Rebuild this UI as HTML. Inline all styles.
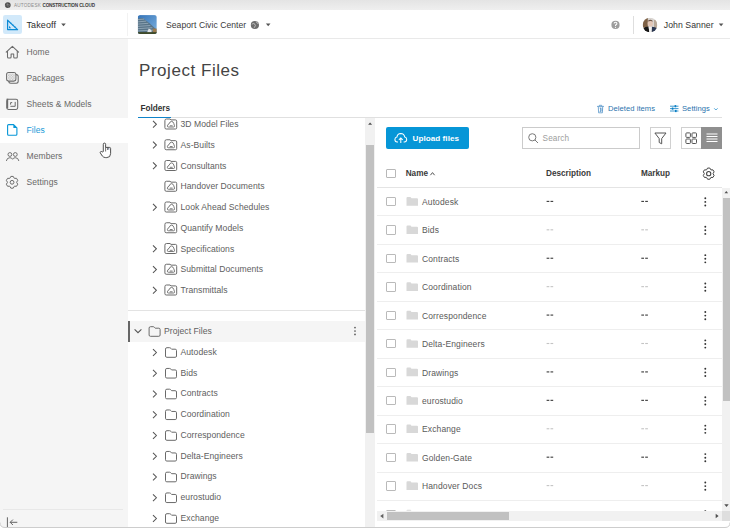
<!DOCTYPE html>
<html><head><meta charset="utf-8"><style>
*{box-sizing:border-box;margin:0;padding:0}
html,body{width:730px;height:529px;overflow:hidden;background:#fff;font-family:"Liberation Sans",sans-serif;color:#3c3c3c}
.a{position:absolute}
.t{position:absolute;white-space:nowrap;line-height:1}
#ov{position:absolute;left:0;top:0;overflow:hidden}
</style></head><body>
<div class="a" style="left:0px;top:0px;width:730px;height:10px;background:linear-gradient(#e4e4e4,#efefef);"></div>
<div class="t" style="left:14.00px;top:4px;font-size:4.6px;color:#8c8c8c;font-weight:normal;letter-spacing:0.22px;">AUTODESK <span style="color:#3a3a3a;font-weight:bold;letter-spacing:-0.12px">CONSTRUCTION CLOUD</span></div>
<div class="a" style="left:0px;top:38px;width:730px;height:1px;background:#e9e9e9;"></div>
<div class="a" style="left:3.1px;top:15.2px;width:18.7px;height:18.5px;background:#d2e9fa;border-radius:2.2px"></div>
<div class="t" style="left:26.50px;top:21px;font-size:9px;color:#2e2e2e;font-weight:normal;letter-spacing:0.1px;">Takeoff</div>
<div class="a" style="left:127px;top:13px;width:1px;height:23px;background:#f2f2f2;"></div>
<div class="t" style="left:166.00px;top:21px;font-size:8.6px;color:#3a3a3a;font-weight:normal;letter-spacing:0.05px;">Seaport Civic Center</div>
<div class="a" style="left:633px;top:15.5px;width:1px;height:18.5px;background:#dedede;"></div>
<div class="t" style="left:663.80px;top:21px;font-size:8.7px;color:#333;font-weight:normal;letter-spacing:0.05px;">John Sanner</div>
<div class="a" style="left:0px;top:39px;width:128px;height:490px;background:#f5f5f5;"></div>
<div class="a" style="left:0px;top:117.6px;width:128px;height:25.4px;background:#fff;"></div>
<div class="t" style="left:26.60px;top:48px;font-size:8.5px;color:#686868;font-weight:normal;letter-spacing:0.05px;">Home</div>
<div class="t" style="left:26.60px;top:74px;font-size:8.5px;color:#686868;font-weight:normal;letter-spacing:0.05px;">Packages</div>
<div class="t" style="left:26.60px;top:100px;font-size:8.5px;color:#686868;font-weight:normal;letter-spacing:0.05px;">Sheets &amp; Models</div>
<div class="t" style="left:26.60px;top:126px;font-size:8.5px;color:#1a9ad8;font-weight:normal;letter-spacing:0.05px;">Files</div>
<div class="t" style="left:26.60px;top:152px;font-size:8.5px;color:#686868;font-weight:normal;letter-spacing:0.05px;">Members</div>
<div class="t" style="left:26.60px;top:178px;font-size:8.5px;color:#686868;font-weight:normal;letter-spacing:0.05px;">Settings</div>
<div class="a" style="left:3px;top:509px;width:120px;height:1px;background:#e8e8e8;"></div>
<div class="t" style="left:139.00px;top:62px;font-size:17px;color:#444;font-weight:normal;letter-spacing:0.55px;">Project Files</div>
<div class="t" style="left:140.50px;top:105px;font-size:8.2px;color:#333;font-weight:bold;letter-spacing:0px;">Folders</div>
<div class="a" style="left:137.8px;top:117px;width:584.6px;height:1px;background:#e0e0e0;"></div>
<div class="a" style="left:137.8px;top:116.6px;width:33.7px;height:1.6px;background:#0f83c9;"></div>
<div class="t" style="left:608.00px;top:105px;font-size:7.6px;color:#2a73ad;font-weight:normal;letter-spacing:0.05px;">Deleted items</div>
<div class="t" style="left:682.00px;top:105px;font-size:7.6px;color:#2a73ad;font-weight:normal;letter-spacing:0.05px;">Settings</div>
<div class="a" style="left:128px;top:118px;width:237.2px;height:411px;overflow:hidden"><div class="a" style="left:-128px;top:-118px;width:730px;height:529px">
<div class="a" style="left:128px;top:310px;width:237.2px;height:1px;background:#e3e3e3;"></div>
<div class="a" style="left:128px;top:320.8px;width:237.2px;height:20.9px;background:#f5f5f5;"></div>
<div class="a" style="left:128px;top:320.8px;width:1.5px;height:20.9px;background:#666;"></div>
<div class="t" style="left:180.50px;top:120px;font-size:8.6px;color:#606060;font-weight:normal;letter-spacing:0.05px;">3D Model Files</div>
<div class="t" style="left:180.50px;top:141px;font-size:8.6px;color:#606060;font-weight:normal;letter-spacing:0.05px;">As-Builts</div>
<div class="t" style="left:180.50px;top:162px;font-size:8.6px;color:#606060;font-weight:normal;letter-spacing:0.05px;">Consultants</div>
<div class="t" style="left:180.50px;top:182px;font-size:8.6px;color:#606060;font-weight:normal;letter-spacing:0.05px;">Handover Documents</div>
<div class="t" style="left:180.50px;top:203px;font-size:8.6px;color:#606060;font-weight:normal;letter-spacing:0.05px;">Look Ahead Schedules</div>
<div class="t" style="left:180.50px;top:224px;font-size:8.6px;color:#606060;font-weight:normal;letter-spacing:0.05px;">Quantify Models</div>
<div class="t" style="left:180.50px;top:245px;font-size:8.6px;color:#606060;font-weight:normal;letter-spacing:0.05px;">Specifications</div>
<div class="t" style="left:180.50px;top:265px;font-size:8.6px;color:#606060;font-weight:normal;letter-spacing:0.05px;">Submittal Documents</div>
<div class="t" style="left:180.50px;top:286px;font-size:8.6px;color:#606060;font-weight:normal;letter-spacing:0.05px;">Transmittals</div>
<div class="t" style="left:164.00px;top:327px;font-size:8.6px;color:#606060;font-weight:normal;letter-spacing:0.05px;">Project Files</div>
<div class="t" style="left:180.50px;top:348px;font-size:8.6px;color:#606060;font-weight:normal;letter-spacing:0.05px;">Autodesk</div>
<div class="t" style="left:180.50px;top:369px;font-size:8.6px;color:#606060;font-weight:normal;letter-spacing:0.05px;">Bids</div>
<div class="t" style="left:180.50px;top:389px;font-size:8.6px;color:#606060;font-weight:normal;letter-spacing:0.05px;">Contracts</div>
<div class="t" style="left:180.50px;top:410px;font-size:8.6px;color:#606060;font-weight:normal;letter-spacing:0.05px;">Coordination</div>
<div class="t" style="left:180.50px;top:431px;font-size:8.6px;color:#606060;font-weight:normal;letter-spacing:0.05px;">Correspondence</div>
<div class="t" style="left:180.50px;top:452px;font-size:8.6px;color:#606060;font-weight:normal;letter-spacing:0.05px;">Delta-Engineers</div>
<div class="t" style="left:180.50px;top:472px;font-size:8.6px;color:#606060;font-weight:normal;letter-spacing:0.05px;">Drawings</div>
<div class="t" style="left:180.50px;top:493px;font-size:8.6px;color:#606060;font-weight:normal;letter-spacing:0.05px;">eurostudio</div>
<div class="t" style="left:180.50px;top:514px;font-size:8.6px;color:#606060;font-weight:normal;letter-spacing:0.05px;">Exchange</div>
</div></div>
<div class="a" style="left:365.2px;top:118px;width:9.8px;height:411px;background:#f1f1f1;"></div>
<div class="a" style="left:366.2px;top:144.7px;width:7.8px;height:288.6px;background:#c1c1c1;"></div>
<div class="a" style="left:386px;top:127.3px;width:83px;height:21.7px;background:#0696d7;border-radius:2px"></div>
<div class="t" style="left:412.60px;top:135px;font-size:8.1px;color:#fff;font-weight:bold;letter-spacing:0.05px;">Upload files</div>
<div class="a" style="left:522px;top:127.2px;width:118.2px;height:21.4px;background:#fff;border:1px solid #cbcbcb"></div>
<div class="t" style="left:542.60px;top:135px;font-size:8.2px;color:#9d9d9d;font-weight:normal;letter-spacing:0.1px;">Search</div>
<div class="a" style="left:650px;top:127.2px;width:20.6px;height:21.4px;background:#fff;border:1px solid #d0d0d0"></div>
<div class="a" style="left:680.6px;top:127.2px;width:41.8px;height:21.4px;background:#fff;border:1px solid #d0d0d0"></div>
<div class="a" style="left:701.3px;top:127.2px;width:21.1px;height:21.4px;background:#8f8f8f;"></div>
<div class="a" style="left:386.2px;top:169.2px;width:9.6px;height:9px;background:#fff;border:1px solid #b8b8b8;border-radius:1px"></div>
<div class="t" style="left:405.70px;top:170px;font-size:8.2px;color:#3a3a3a;font-weight:bold;letter-spacing:0px;">Name</div>
<div class="t" style="left:546.00px;top:170px;font-size:8.2px;color:#3a3a3a;font-weight:bold;letter-spacing:0px;">Description</div>
<div class="t" style="left:641.00px;top:170px;font-size:8.2px;color:#3a3a3a;font-weight:bold;letter-spacing:0px;">Markup</div>
<div class="a" style="left:377px;top:187px;width:345.3px;height:1px;background:#e4e4e4;"></div>
<div class="a" style="left:375px;top:188px;width:347.3px;height:322.7px;overflow:hidden"><div class="a" style="left:-375px;top:-188px;width:730px;height:529px">
<div class="a" style="left:377px;top:215px;width:345.3px;height:1px;background:#eeeeee;"></div>
<div class="a" style="left:386.2px;top:197.0px;width:9.6px;height:9.4px;background:#fff;border:1px solid #bababa;border-radius:1px"></div>
<div class="t" style="left:422.00px;top:198px;font-size:8.5px;color:#5a5a5a;font-weight:normal;letter-spacing:0.12px;">Autodesk</div>
<div class="a" style="left:377px;top:244px;width:345.3px;height:1px;background:#eeeeee;"></div>
<div class="a" style="left:386.2px;top:225.42px;width:9.6px;height:9.4px;background:#fff;border:1px solid #bababa;border-radius:1px"></div>
<div class="t" style="left:422.00px;top:226px;font-size:8.5px;color:#5a5a5a;font-weight:normal;letter-spacing:0.12px;">Bids</div>
<div class="a" style="left:377px;top:272px;width:345.3px;height:1px;background:#eeeeee;"></div>
<div class="a" style="left:386.2px;top:253.84px;width:9.6px;height:9.4px;background:#fff;border:1px solid #bababa;border-radius:1px"></div>
<div class="t" style="left:422.00px;top:255px;font-size:8.5px;color:#5a5a5a;font-weight:normal;letter-spacing:0.12px;">Contracts</div>
<div class="a" style="left:377px;top:301px;width:345.3px;height:1px;background:#eeeeee;"></div>
<div class="a" style="left:386.2px;top:282.26000000000005px;width:9.6px;height:9.4px;background:#fff;border:1px solid #bababa;border-radius:1px"></div>
<div class="t" style="left:422.00px;top:283px;font-size:8.5px;color:#5a5a5a;font-weight:normal;letter-spacing:0.12px;">Coordination</div>
<div class="a" style="left:377px;top:329px;width:345.3px;height:1px;background:#eeeeee;"></div>
<div class="a" style="left:386.2px;top:310.68000000000006px;width:9.6px;height:9.4px;background:#fff;border:1px solid #bababa;border-radius:1px"></div>
<div class="t" style="left:422.00px;top:312px;font-size:8.5px;color:#5a5a5a;font-weight:normal;letter-spacing:0.12px;">Correspondence</div>
<div class="a" style="left:377px;top:358px;width:345.3px;height:1px;background:#eeeeee;"></div>
<div class="a" style="left:386.2px;top:339.1px;width:9.6px;height:9.4px;background:#fff;border:1px solid #bababa;border-radius:1px"></div>
<div class="t" style="left:422.00px;top:340px;font-size:8.5px;color:#5a5a5a;font-weight:normal;letter-spacing:0.12px;">Delta-Engineers</div>
<div class="a" style="left:377px;top:386px;width:345.3px;height:1px;background:#eeeeee;"></div>
<div class="a" style="left:386.2px;top:367.52000000000004px;width:9.6px;height:9.4px;background:#fff;border:1px solid #bababa;border-radius:1px"></div>
<div class="t" style="left:422.00px;top:369px;font-size:8.5px;color:#5a5a5a;font-weight:normal;letter-spacing:0.12px;">Drawings</div>
<div class="a" style="left:377px;top:415px;width:345.3px;height:1px;background:#eeeeee;"></div>
<div class="a" style="left:386.2px;top:395.94000000000005px;width:9.6px;height:9.4px;background:#fff;border:1px solid #bababa;border-radius:1px"></div>
<div class="t" style="left:422.00px;top:397px;font-size:8.5px;color:#5a5a5a;font-weight:normal;letter-spacing:0.12px;">eurostudio</div>
<div class="a" style="left:377px;top:443px;width:345.3px;height:1px;background:#eeeeee;"></div>
<div class="a" style="left:386.2px;top:424.36px;width:9.6px;height:9.4px;background:#fff;border:1px solid #bababa;border-radius:1px"></div>
<div class="t" style="left:422.00px;top:425px;font-size:8.5px;color:#5a5a5a;font-weight:normal;letter-spacing:0.12px;">Exchange</div>
<div class="a" style="left:377px;top:472px;width:345.3px;height:1px;background:#eeeeee;"></div>
<div class="a" style="left:386.2px;top:452.7800000000001px;width:9.6px;height:9.4px;background:#fff;border:1px solid #bababa;border-radius:1px"></div>
<div class="t" style="left:422.00px;top:454px;font-size:8.5px;color:#5a5a5a;font-weight:normal;letter-spacing:0.12px;">Golden-Gate</div>
<div class="a" style="left:377px;top:500px;width:345.3px;height:1px;background:#eeeeee;"></div>
<div class="a" style="left:386.2px;top:481.20000000000005px;width:9.6px;height:9.4px;background:#fff;border:1px solid #bababa;border-radius:1px"></div>
<div class="t" style="left:422.00px;top:482px;font-size:8.5px;color:#5a5a5a;font-weight:normal;letter-spacing:0.12px;">Handover Docs</div>
<div class="a" style="left:377px;top:529px;width:345.3px;height:1px;background:#eeeeee;"></div>
<div class="a" style="left:386.2px;top:509.62px;width:9.6px;height:9.4px;background:#fff;border:1px solid #bababa;border-radius:1px"></div>
</div></div>
<div class="a" style="left:722.3px;top:187.5px;width:7.7px;height:323.2px;background:#f1f1f1;"></div>
<div class="a" style="left:723px;top:197.8px;width:7px;height:203px;background:#c1c1c1;"></div>
<div class="a" style="left:377px;top:510.8px;width:353px;height:10.4px;background:#f1f1f1;"></div>
<div class="a" style="left:722.3px;top:510.8px;width:7.7px;height:10.4px;background:#dedede;"></div>
<div class="a" style="left:386.7px;top:512.3px;width:122.5px;height:7.3px;background:#c1c1c1;"></div>
<svg id="ov" width="730" height="529" viewBox="0 0 730 529"><circle cx="7.8" cy="5.1" r="2.9" fill="#4d4d4d"/><path d="M5.4 5.4 Q7.6 3.4 10.2 5.4 M7 3 L8.4 7.6" stroke="#9a9a9a" stroke-width="0.55" fill="none"/>
<path d="M7.6 20.2 L17.6 29.6 L7.6 29.6 Z" fill="none" stroke="#0a8ad6" stroke-width="1.2" stroke-linejoin="round"/><path d="M9 25.8 L11.2 28.2 L9 28.2Z" fill="#0a8ad6"/><path d="M10.6 23.6 L11.4 22.8 M12.6 25.5 L13.4 24.7 M14.6 27.4 L15.4 26.6" stroke="#0a8ad6" stroke-width="0.7"/>
<path d="M61.2 23.6 H65.8 L63.5 26.2Z" fill="#555"/>
<defs><clipPath id="cp"><rect x="0" y="0" width="19" height="19" rx="2.5"/></clipPath><linearGradient id="sky" x1="0" y1="0" x2="1" y2="1"><stop offset="0" stop-color="#3473b8"/><stop offset="1" stop-color="#7db2df"/></linearGradient></defs>
<g clip-path="url(#cp)" transform="translate(137.8 15.1)"><rect width="19" height="19" fill="url(#sky)"/>
<path d="M0 3.5 L5 3 L12 8.5 L17.5 13.5 L19 19 L0 19Z" fill="#587488"/>
<path d="M0 4.5 L6.5 4 M0 6.8 L8.5 6 M0 9 L10.5 8.2 M0 11.3 L12.5 10.4 M0 13.6 L14.5 12.6 M0 15.8 L16 15" stroke="#a3b6c4" stroke-width="0.7"/>
<path d="M9 18 L11 13.5 L13.5 15 L14 18Z" fill="#dfe4e8"/>
<rect x="15" y="13.5" width="4" height="4.5" fill="#9c7a4e"/>
<rect x="0" y="17" width="19" height="2" fill="#3f4a2a"/></g>
<circle cx="254.9" cy="25" r="4.1" fill="#6d6d6d"/><path d="M251.8 24.3 Q253.2 22.9 254.5 23.8 L255.4 25.6 L254.2 27.8 M256.3 21.4 L257 23 L258.6 23.6" stroke="#cfcfcf" stroke-width="0.8" fill="none"/>
<path d="M265.9 23.6 H270.5 L268.2 26.2Z" fill="#555"/>
<circle cx="615.5" cy="24.9" r="4.1" fill="#9d9d9d"/>
<path d="M614.1 23.6 Q614.1 22.3 615.5 22.3 Q616.9 22.3 616.9 23.5 Q616.9 24.3 616 24.8 Q615.5 25.1 615.5 25.9" fill="none" stroke="#fff" stroke-width="1.05"/><circle cx="615.5" cy="27.3" r="0.6" fill="#fff"/>
<defs><clipPath id="av"><circle cx="650" cy="25" r="7.3"/></clipPath></defs><g clip-path="url(#av)"><rect x="642.7" y="17.7" width="14.6" height="14.6" fill="#d9d5d1"/>
<path d="M642.7 18 H647.8 V27.5 H642.7Z" fill="#7d6045"/><rect x="654" y="20" width="3.3" height="8" fill="#b8a898"/>
<ellipse cx="650.3" cy="23.6" rx="2.6" ry="3.3" fill="#e2c6b6"/><path d="M647.7 21.6 Q648 19.8 650.3 19.8 Q652.6 19.8 652.9 21.6 Q651.5 20.8 650.3 20.9 Q649 20.9 647.7 21.6Z" fill="#6d5545"/>
<path d="M643.5 32.3 V28 Q645 26.8 648.6 26.6 L649.4 32.3Z" fill="#161616"/><path d="M651.8 26.8 Q655.5 27 657.3 28.4 V32.3 H651.8Z" fill="#2b3852"/><path d="M648.6 26.8 H651.8 L651.2 32.3 H649.3Z" fill="#f2f2f2"/></g></g>
<path d="M718.8 23.6 H723.4 L721.1 26.2Z" fill="#555"/>
<path d="M6.2 52.2 L12.4 46.3 L18.6 52.2" fill="none" stroke="#6b6b6b" stroke-width="1.05" stroke-linejoin="round" stroke-linecap="round"/><path d="M7.5 51 V57 Q7.5 58 8.5 58 H10.1 Q11.1 58 11.1 57 V54 H13.7 V57 Q13.7 58 14.7 58 H16.3 Q17.3 58 17.3 57 V51" fill="none" stroke="#6b6b6b" stroke-width="1.05" stroke-linejoin="round"/>
<defs><pattern id="dots" x="0" y="0" width="1.6" height="1.6" patternUnits="userSpaceOnUse"><rect width="1.6" height="1.6" fill="#f5f5f5"/><rect x="0" y="0" width="0.8" height="0.8" fill="#bdbdbd"/><rect x="0.8" y="0.8" width="0.8" height="0.8" fill="#bdbdbd"/></pattern></defs>
<rect x="8.8" y="74.6" width="9.4" height="8.6" rx="2" fill="none" stroke="#6b6b6b" stroke-width="1.05"/><rect x="6.6" y="72.5" width="9.3" height="8.6" rx="2" fill="#f5f5f5" stroke="#6b6b6b" stroke-width="1.05"/><rect x="7.6" y="73.5" width="7.3" height="6.6" rx="1" fill="url(#dots)"/>
<rect x="6.8" y="99.3" width="10.9" height="10.1" rx="1.6" fill="none" stroke="#6b6b6b" stroke-width="1.05"/><path d="M7.4 98.6 V108.4" stroke="#6b6b6b" stroke-width="1.6"/><path d="M10.6 104.6 V102.6 H12.2 M10.4 106.3 H15.2 V101.9" fill="none" stroke="#6b6b6b" stroke-width="1"/>
<path d="M8.6 124.6 H13.6 L16.9 127.9 V134.2 Q16.9 135.2 15.9 135.2 H8.6 Q7.6 135.2 7.6 134.2 V125.6 Q7.6 124.6 8.6 124.6Z" fill="none" stroke="#0696d7" stroke-width="1.1" stroke-linejoin="round"/><path d="M13.4 124.6 L16.9 128.1 H13.4Z" fill="#0696d7"/>
<circle cx="9.9" cy="154.5" r="1.9" fill="none" stroke="#6b6b6b" stroke-width="0.95"/><circle cx="15.3" cy="154.5" r="1.9" fill="none" stroke="#6b6b6b" stroke-width="0.95"/><path d="M6.4 160.6 Q6.9 157.7 9.9 157.7 Q11.9 157.7 12.6 159.3 Q13.3 157.7 15.3 157.7 Q18.3 157.7 18.8 160.6" fill="none" stroke="#6b6b6b" stroke-width="0.95" stroke-linecap="round"/>
<path d="M9.86 178.26 L10.86 176.42 L13.24 176.42 L14.24 178.26 L14.45 178.38 L16.55 178.33 L17.74 180.39 L16.65 182.18 L16.65 182.42 L17.74 184.21 L16.55 186.27 L14.45 186.22 L14.24 186.34 L13.24 188.18 L10.86 188.18 L9.86 186.34 L9.65 186.22 L7.55 186.27 L6.36 184.21 L7.45 182.42 L7.45 182.18 L6.36 180.39 L7.55 178.33 L9.65 178.38Z" fill="none" stroke="#6b6b6b" stroke-width="1" stroke-linejoin="round"/><circle cx="12.05" cy="182.3" r="1.9" fill="none" stroke="#6b6b6b" stroke-width="1"/>
<path d="M103.3 151.6 V144.3 Q103.3 143.1 104.4 143.1 Q105.6 143.1 105.6 144.3 V147.4 H109.5 Q110.6 147.4 110.6 148.5 V153.6 Q110.6 157.6 106.8 157.6 H105.6 Q103.6 157.6 102.3 156 L100.3 152.9 Q99.9 152 100.7 151.6 Q101.5 151.2 102.2 152 Z" fill="#fff" stroke="#333" stroke-width="0.85" stroke-linejoin="round"/><path d="M105.6 147.4 V151.5 M107.6 147.6 V150" stroke="#333" stroke-width="0.7"/><rect x="107.8" y="148" width="1.5" height="1.6" fill="#8a93a8"/>
<path d="M7.4 517.3 V527" stroke="#555" stroke-width="0.9"/><path d="M17.3 522.3 H10.2 M12.9 519.6 L10.2 522.3 L12.9 525" fill="none" stroke="#555" stroke-width="0.9"/>
<path d="M597 106.4 H604 M599.3 106.3 V105.3 H601.7 V106.3 M598.3 106.6 L598.6 112.8 H602.4 L602.7 106.6 M599.6 108 H601.4 M600.5 108 V111.4 M599.6 111.4 H601.4 M601.9 108.3 V111" fill="none" stroke="#4d8fc6" stroke-width="0.75"/>
<g transform="translate(0 2.6)"><path d="M670 103.6 H678.5 M670 106 H678.5 M670 108.4 H678.5" stroke="#0a7fc4" stroke-width="0.8"/><rect x="674.6" y="102.5" width="1.6" height="2.2" fill="#0a7fc4"/><rect x="671.8" y="104.9" width="1.6" height="2.2" fill="#0a7fc4"/><rect x="675" y="107.3" width="1.6" height="2.2" fill="#0a7fc4"/></g>
<path d="M714.2 108.3 L715.9 110 L717.6 108.3" fill="none" stroke="#0a7fc4" stroke-width="0.7"/>
<defs><clipPath id="treeclip"><rect x="128" y="118" width="237.2" height="411"/></clipPath></defs><g clip-path="url(#treeclip)"><path d="M153.00 120.90 L156.40 124.30 L153.00 127.70" fill="none" stroke="#555" stroke-width="1.05"/><g transform="translate(164.40 118.50)"><path d="M0.5 2.2 Q0.5 0.5 2 0.5 H5.6 L6.6 1.4 H11.1 Q12.3 1.4 12.3 2.7 V9.3 Q12.3 10.5 11.1 10.5 H1.8 Q0.5 10.5 0.5 9.2 Z" fill="none" stroke="#6a6a6a" stroke-width="1"/><path d="M3.9 8.5 Q2.9 8.5 3.0 7.4 Q3.2 5.7 4.7 5.3 Q5.4 2.9 7.2 2.9 Q8.9 3 9.4 5 L10.1 7.3 Q10.3 8.5 9.3 8.5 Z M5.4 7.3 H8.2" fill="none" stroke="#6a6a6a" stroke-width="0.9"/></g><path d="M153.00 141.65 L156.40 145.05 L153.00 148.45" fill="none" stroke="#555" stroke-width="1.05"/><g transform="translate(164.40 139.25)"><path d="M0.5 2.2 Q0.5 0.5 2 0.5 H5.6 L6.6 1.4 H11.1 Q12.3 1.4 12.3 2.7 V9.3 Q12.3 10.5 11.1 10.5 H1.8 Q0.5 10.5 0.5 9.2 Z" fill="none" stroke="#6a6a6a" stroke-width="1"/><path d="M3.9 8.5 Q2.9 8.5 3.0 7.4 Q3.2 5.7 4.7 5.3 Q5.4 2.9 7.2 2.9 Q8.9 3 9.4 5 L10.1 7.3 Q10.3 8.5 9.3 8.5 Z M5.4 7.3 H8.2" fill="none" stroke="#6a6a6a" stroke-width="0.9"/></g><path d="M153.00 162.40 L156.40 165.80 L153.00 169.20" fill="none" stroke="#555" stroke-width="1.05"/><g transform="translate(164.40 160.00)"><path d="M0.5 2.2 Q0.5 0.5 2 0.5 H5.6 L6.6 1.4 H11.1 Q12.3 1.4 12.3 2.7 V9.3 Q12.3 10.5 11.1 10.5 H1.8 Q0.5 10.5 0.5 9.2 Z" fill="none" stroke="#6a6a6a" stroke-width="1"/><path d="M3.9 8.5 Q2.9 8.5 3.0 7.4 Q3.2 5.7 4.7 5.3 Q5.4 2.9 7.2 2.9 Q8.9 3 9.4 5 L10.1 7.3 Q10.3 8.5 9.3 8.5 Z M5.4 7.3 H8.2" fill="none" stroke="#6a6a6a" stroke-width="0.9"/></g><g transform="translate(164.40 180.75)"><path d="M0.5 2.2 Q0.5 0.5 2 0.5 H5.6 L6.6 1.4 H11.1 Q12.3 1.4 12.3 2.7 V9.3 Q12.3 10.5 11.1 10.5 H1.8 Q0.5 10.5 0.5 9.2 Z" fill="none" stroke="#6a6a6a" stroke-width="1"/><path d="M3.9 8.5 Q2.9 8.5 3.0 7.4 Q3.2 5.7 4.7 5.3 Q5.4 2.9 7.2 2.9 Q8.9 3 9.4 5 L10.1 7.3 Q10.3 8.5 9.3 8.5 Z M5.4 7.3 H8.2" fill="none" stroke="#6a6a6a" stroke-width="0.9"/></g><path d="M153.00 203.90 L156.40 207.30 L153.00 210.70" fill="none" stroke="#555" stroke-width="1.05"/><g transform="translate(164.40 201.50)"><path d="M0.5 2.2 Q0.5 0.5 2 0.5 H5.6 L6.6 1.4 H11.1 Q12.3 1.4 12.3 2.7 V9.3 Q12.3 10.5 11.1 10.5 H1.8 Q0.5 10.5 0.5 9.2 Z" fill="none" stroke="#6a6a6a" stroke-width="1"/><path d="M3.9 8.5 Q2.9 8.5 3.0 7.4 Q3.2 5.7 4.7 5.3 Q5.4 2.9 7.2 2.9 Q8.9 3 9.4 5 L10.1 7.3 Q10.3 8.5 9.3 8.5 Z M5.4 7.3 H8.2" fill="none" stroke="#6a6a6a" stroke-width="0.9"/></g><g transform="translate(164.40 222.25)"><path d="M0.5 2.2 Q0.5 0.5 2 0.5 H5.6 L6.6 1.4 H11.1 Q12.3 1.4 12.3 2.7 V9.3 Q12.3 10.5 11.1 10.5 H1.8 Q0.5 10.5 0.5 9.2 Z" fill="none" stroke="#6a6a6a" stroke-width="1"/><path d="M3.9 8.5 Q2.9 8.5 3.0 7.4 Q3.2 5.7 4.7 5.3 Q5.4 2.9 7.2 2.9 Q8.9 3 9.4 5 L10.1 7.3 Q10.3 8.5 9.3 8.5 Z M5.4 7.3 H8.2" fill="none" stroke="#6a6a6a" stroke-width="0.9"/></g><path d="M153.00 245.40 L156.40 248.80 L153.00 252.20" fill="none" stroke="#555" stroke-width="1.05"/><g transform="translate(164.40 243.00)"><path d="M0.5 2.2 Q0.5 0.5 2 0.5 H5.6 L6.6 1.4 H11.1 Q12.3 1.4 12.3 2.7 V9.3 Q12.3 10.5 11.1 10.5 H1.8 Q0.5 10.5 0.5 9.2 Z" fill="none" stroke="#6a6a6a" stroke-width="1"/><path d="M3.9 8.5 Q2.9 8.5 3.0 7.4 Q3.2 5.7 4.7 5.3 Q5.4 2.9 7.2 2.9 Q8.9 3 9.4 5 L10.1 7.3 Q10.3 8.5 9.3 8.5 Z M5.4 7.3 H8.2" fill="none" stroke="#6a6a6a" stroke-width="0.9"/></g><path d="M153.00 266.15 L156.40 269.55 L153.00 272.95" fill="none" stroke="#555" stroke-width="1.05"/><g transform="translate(164.40 263.75)"><path d="M0.5 2.2 Q0.5 0.5 2 0.5 H5.6 L6.6 1.4 H11.1 Q12.3 1.4 12.3 2.7 V9.3 Q12.3 10.5 11.1 10.5 H1.8 Q0.5 10.5 0.5 9.2 Z" fill="none" stroke="#6a6a6a" stroke-width="1"/><path d="M3.9 8.5 Q2.9 8.5 3.0 7.4 Q3.2 5.7 4.7 5.3 Q5.4 2.9 7.2 2.9 Q8.9 3 9.4 5 L10.1 7.3 Q10.3 8.5 9.3 8.5 Z M5.4 7.3 H8.2" fill="none" stroke="#6a6a6a" stroke-width="0.9"/></g><path d="M153.00 286.90 L156.40 290.30 L153.00 293.70" fill="none" stroke="#555" stroke-width="1.05"/><g transform="translate(164.40 284.50)"><path d="M0.5 2.2 Q0.5 0.5 2 0.5 H5.6 L6.6 1.4 H11.1 Q12.3 1.4 12.3 2.7 V9.3 Q12.3 10.5 11.1 10.5 H1.8 Q0.5 10.5 0.5 9.2 Z" fill="none" stroke="#6a6a6a" stroke-width="1"/><path d="M3.9 8.5 Q2.9 8.5 3.0 7.4 Q3.2 5.7 4.7 5.3 Q5.4 2.9 7.2 2.9 Q8.9 3 9.4 5 L10.1 7.3 Q10.3 8.5 9.3 8.5 Z M5.4 7.3 H8.2" fill="none" stroke="#6a6a6a" stroke-width="0.9"/></g><path d="M134.6 329.3 L138 332.7 L141.4 329.3" fill="none" stroke="#555" stroke-width="1.05"/><path d="M149.10 328.10 Q149.10 326.70 150.50 326.70 H153.20 Q154.00 326.70 154.50 327.40 L155.20 328.20 H158.80 Q160.10 328.20 160.10 329.50 V335.00 Q160.10 336.30 158.80 336.30 H150.40 Q149.10 336.30 149.10 335.00 Z" fill="none" stroke="#6a6a6a" stroke-width="1"/><circle cx="355" cy="327.6" r="0.85" fill="#555"/><circle cx="355" cy="331" r="0.85" fill="#555"/><circle cx="355" cy="334.4" r="0.85" fill="#555"/><path d="M153.00 349.10 L156.40 352.50 L153.00 355.90" fill="none" stroke="#555" stroke-width="1.05"/><path d="M165.50 349.10 Q165.50 347.70 166.90 347.70 H169.60 Q170.40 347.70 170.90 348.40 L171.60 349.20 H175.20 Q176.50 349.20 176.50 350.50 V356.00 Q176.50 357.30 175.20 357.30 H166.80 Q165.50 357.30 165.50 356.00 Z" fill="none" stroke="#6a6a6a" stroke-width="1"/><path d="M153.00 369.85 L156.40 373.25 L153.00 376.65" fill="none" stroke="#555" stroke-width="1.05"/><path d="M165.50 369.85 Q165.50 368.45 166.90 368.45 H169.60 Q170.40 368.45 170.90 369.15 L171.60 369.95 H175.20 Q176.50 369.95 176.50 371.25 V376.75 Q176.50 378.05 175.20 378.05 H166.80 Q165.50 378.05 165.50 376.75 Z" fill="none" stroke="#6a6a6a" stroke-width="1"/><path d="M153.00 390.60 L156.40 394.00 L153.00 397.40" fill="none" stroke="#555" stroke-width="1.05"/><path d="M165.50 390.60 Q165.50 389.20 166.90 389.20 H169.60 Q170.40 389.20 170.90 389.90 L171.60 390.70 H175.20 Q176.50 390.70 176.50 392.00 V397.50 Q176.50 398.80 175.20 398.80 H166.80 Q165.50 398.80 165.50 397.50 Z" fill="none" stroke="#6a6a6a" stroke-width="1"/><path d="M153.00 411.35 L156.40 414.75 L153.00 418.15" fill="none" stroke="#555" stroke-width="1.05"/><path d="M165.50 411.35 Q165.50 409.95 166.90 409.95 H169.60 Q170.40 409.95 170.90 410.65 L171.60 411.45 H175.20 Q176.50 411.45 176.50 412.75 V418.25 Q176.50 419.55 175.20 419.55 H166.80 Q165.50 419.55 165.50 418.25 Z" fill="none" stroke="#6a6a6a" stroke-width="1"/><path d="M153.00 432.10 L156.40 435.50 L153.00 438.90" fill="none" stroke="#555" stroke-width="1.05"/><path d="M165.50 432.10 Q165.50 430.70 166.90 430.70 H169.60 Q170.40 430.70 170.90 431.40 L171.60 432.20 H175.20 Q176.50 432.20 176.50 433.50 V439.00 Q176.50 440.30 175.20 440.30 H166.80 Q165.50 440.30 165.50 439.00 Z" fill="none" stroke="#6a6a6a" stroke-width="1"/><path d="M153.00 452.85 L156.40 456.25 L153.00 459.65" fill="none" stroke="#555" stroke-width="1.05"/><path d="M165.50 452.85 Q165.50 451.45 166.90 451.45 H169.60 Q170.40 451.45 170.90 452.15 L171.60 452.95 H175.20 Q176.50 452.95 176.50 454.25 V459.75 Q176.50 461.05 175.20 461.05 H166.80 Q165.50 461.05 165.50 459.75 Z" fill="none" stroke="#6a6a6a" stroke-width="1"/><path d="M153.00 473.60 L156.40 477.00 L153.00 480.40" fill="none" stroke="#555" stroke-width="1.05"/><path d="M165.50 473.60 Q165.50 472.20 166.90 472.20 H169.60 Q170.40 472.20 170.90 472.90 L171.60 473.70 H175.20 Q176.50 473.70 176.50 475.00 V480.50 Q176.50 481.80 175.20 481.80 H166.80 Q165.50 481.80 165.50 480.50 Z" fill="none" stroke="#6a6a6a" stroke-width="1"/><path d="M153.00 494.35 L156.40 497.75 L153.00 501.15" fill="none" stroke="#555" stroke-width="1.05"/><path d="M165.50 494.35 Q165.50 492.95 166.90 492.95 H169.60 Q170.40 492.95 170.90 493.65 L171.60 494.45 H175.20 Q176.50 494.45 176.50 495.75 V501.25 Q176.50 502.55 175.20 502.55 H166.80 Q165.50 502.55 165.50 501.25 Z" fill="none" stroke="#6a6a6a" stroke-width="1"/><path d="M153.00 515.10 L156.40 518.50 L153.00 521.90" fill="none" stroke="#555" stroke-width="1.05"/><path d="M165.50 515.10 Q165.50 513.70 166.90 513.70 H169.60 Q170.40 513.70 170.90 514.40 L171.60 515.20 H175.20 Q176.50 515.20 176.50 516.50 V522.00 Q176.50 523.30 175.20 523.30 H166.80 Q165.50 523.30 165.50 522.00 Z" fill="none" stroke="#6a6a6a" stroke-width="1"/></g>
<path d="M368.1 124.8 L370.1 122.6 L372.1 124.8Z" fill="#505050"/>
<path d="M398 142 H397.2 Q394.9 141.8 394.9 139.4 Q394.9 137.4 396.9 137.1 Q397.5 133.6 400.8 133.5 Q404.1 133.6 404.7 136.9 Q406.7 137.2 406.7 139.4 Q406.6 141.8 404.3 142 H403.6" fill="none" stroke="#fff" stroke-width="1.05"/><path d="M400.8 143 V137.9 M398.9 139.8 L400.8 137.9 L402.7 139.8" fill="none" stroke="#fff" stroke-width="1.05"/>
<circle cx="532.3" cy="137.3" r="3.6" fill="none" stroke="#7a7a7a" stroke-width="1"/><path d="M534.9 139.9 L538 143" stroke="#7a7a7a" stroke-width="1"/>
<path d="M654.9 133 H666 L661.7 138.6 V143.8 L659.2 142.5 V138.6 Z" fill="none" stroke="#555" stroke-width="1" stroke-linejoin="round"/>
<rect x="685.9" y="132.9" width="4.5" height="4.5" rx="0.8" fill="none" stroke="#555" stroke-width="1"/><rect x="692" y="132.9" width="4.5" height="4.5" rx="0.8" fill="none" stroke="#555" stroke-width="1"/><rect x="685.9" y="139" width="4.5" height="4.5" rx="0.8" fill="none" stroke="#555" stroke-width="1"/><rect x="692" y="139" width="4.5" height="4.5" rx="0.8" fill="none" stroke="#555" stroke-width="1"/>
<path d="M706.5 134 H717.5 M706.5 136.5 H717.5 M706.5 139 H717.5 M706.5 141.5 H717.5" stroke="#fff" stroke-width="1"/>
<path d="M430.4 175.2 L432.5 172.6 L434.6 175.2" fill="none" stroke="#444" stroke-width="0.9"/>
<path d="M706.60 169.78 L707.57 168.06 L709.83 168.06 L710.80 169.78 L711.00 169.90 L712.98 169.88 L714.10 171.83 L713.10 173.53 L713.10 173.77 L714.10 175.47 L712.98 177.42 L711.00 177.40 L710.80 177.52 L709.83 179.24 L707.57 179.24 L706.60 177.52 L706.40 177.40 L704.42 177.42 L703.30 175.47 L704.30 173.77 L704.30 173.53 L703.30 171.83 L704.42 169.88 L706.40 169.90Z" fill="none" stroke="#444" stroke-width="1" stroke-linejoin="round"/><circle cx="708.7" cy="173.65" r="2.1" fill="none" stroke="#444" stroke-width="1.1"/>
<defs><clipPath id="tblclip"><rect x="375" y="188" width="347.3" height="322.7"/></clipPath></defs><g clip-path="url(#tblclip)"><path d="M406.5 198.10 Q406.5 197.10 407.5 197.10 H410.5 L411.5 198.30 H417 Q418 198.30 418 199.30 V205.70 H406.5Z" fill="#d8d8d8"/><rect x="546.6" y="200.85" width="2.7" height="1.1" fill="#3a3a3a"/><rect x="550.5" y="200.85" width="2.7" height="1.1" fill="#3a3a3a"/><rect x="641.3" y="200.85" width="2.7" height="1.1" fill="#3a3a3a"/><rect x="645.1999999999999" y="200.85" width="2.7" height="1.1" fill="#3a3a3a"/><circle cx="705.3" cy="198.30" r="0.95" fill="#333"/><circle cx="705.3" cy="201.90" r="0.95" fill="#333"/><circle cx="705.3" cy="205.50" r="0.95" fill="#333"/><path d="M406.5 226.52 Q406.5 225.52 407.5 225.52 H410.5 L411.5 226.72 H417 Q418 226.72 418 227.72 V234.12 H406.5Z" fill="#d8d8d8"/><rect x="546.6" y="229.27" width="2.7" height="1.1" fill="#c4c4c4"/><rect x="550.5" y="229.27" width="2.7" height="1.1" fill="#c4c4c4"/><rect x="641.3" y="229.27" width="2.7" height="1.1" fill="#c4c4c4"/><rect x="645.1999999999999" y="229.27" width="2.7" height="1.1" fill="#c4c4c4"/><circle cx="705.3" cy="226.72" r="0.95" fill="#333"/><circle cx="705.3" cy="230.32" r="0.95" fill="#333"/><circle cx="705.3" cy="233.92" r="0.95" fill="#333"/><path d="M406.5 254.94 Q406.5 253.94 407.5 253.94 H410.5 L411.5 255.14 H417 Q418 255.14 418 256.14 V262.54 H406.5Z" fill="#d8d8d8"/><rect x="546.6" y="257.69" width="2.7" height="1.1" fill="#3a3a3a"/><rect x="550.5" y="257.69" width="2.7" height="1.1" fill="#3a3a3a"/><rect x="641.3" y="257.69" width="2.7" height="1.1" fill="#3a3a3a"/><rect x="645.1999999999999" y="257.69" width="2.7" height="1.1" fill="#3a3a3a"/><circle cx="705.3" cy="255.14" r="0.95" fill="#333"/><circle cx="705.3" cy="258.74" r="0.95" fill="#333"/><circle cx="705.3" cy="262.34" r="0.95" fill="#333"/><path d="M406.5 283.36 Q406.5 282.36 407.5 282.36 H410.5 L411.5 283.56 H417 Q418 283.56 418 284.56 V290.96 H406.5Z" fill="#d8d8d8"/><rect x="546.6" y="286.11" width="2.7" height="1.1" fill="#c4c4c4"/><rect x="550.5" y="286.11" width="2.7" height="1.1" fill="#c4c4c4"/><rect x="641.3" y="286.11" width="2.7" height="1.1" fill="#c4c4c4"/><rect x="645.1999999999999" y="286.11" width="2.7" height="1.1" fill="#c4c4c4"/><circle cx="705.3" cy="283.56" r="0.95" fill="#333"/><circle cx="705.3" cy="287.16" r="0.95" fill="#333"/><circle cx="705.3" cy="290.76" r="0.95" fill="#333"/><path d="M406.5 311.78 Q406.5 310.78 407.5 310.78 H410.5 L411.5 311.98 H417 Q418 311.98 418 312.98 V319.38 H406.5Z" fill="#d8d8d8"/><rect x="546.6" y="314.53" width="2.7" height="1.1" fill="#3a3a3a"/><rect x="550.5" y="314.53" width="2.7" height="1.1" fill="#3a3a3a"/><rect x="641.3" y="314.53" width="2.7" height="1.1" fill="#3a3a3a"/><rect x="645.1999999999999" y="314.53" width="2.7" height="1.1" fill="#3a3a3a"/><circle cx="705.3" cy="311.98" r="0.95" fill="#333"/><circle cx="705.3" cy="315.58" r="0.95" fill="#333"/><circle cx="705.3" cy="319.18" r="0.95" fill="#333"/><path d="M406.5 340.20 Q406.5 339.20 407.5 339.20 H410.5 L411.5 340.40 H417 Q418 340.40 418 341.40 V347.80 H406.5Z" fill="#d8d8d8"/><rect x="546.6" y="342.95" width="2.7" height="1.1" fill="#c4c4c4"/><rect x="550.5" y="342.95" width="2.7" height="1.1" fill="#c4c4c4"/><rect x="641.3" y="342.95" width="2.7" height="1.1" fill="#c4c4c4"/><rect x="645.1999999999999" y="342.95" width="2.7" height="1.1" fill="#c4c4c4"/><circle cx="705.3" cy="340.40" r="0.95" fill="#333"/><circle cx="705.3" cy="344.00" r="0.95" fill="#333"/><circle cx="705.3" cy="347.60" r="0.95" fill="#333"/><path d="M406.5 368.62 Q406.5 367.62 407.5 367.62 H410.5 L411.5 368.82 H417 Q418 368.82 418 369.82 V376.22 H406.5Z" fill="#d8d8d8"/><rect x="546.6" y="371.37" width="2.7" height="1.1" fill="#3a3a3a"/><rect x="550.5" y="371.37" width="2.7" height="1.1" fill="#3a3a3a"/><rect x="641.3" y="371.37" width="2.7" height="1.1" fill="#3a3a3a"/><rect x="645.1999999999999" y="371.37" width="2.7" height="1.1" fill="#3a3a3a"/><circle cx="705.3" cy="368.82" r="0.95" fill="#333"/><circle cx="705.3" cy="372.42" r="0.95" fill="#333"/><circle cx="705.3" cy="376.02" r="0.95" fill="#333"/><path d="M406.5 397.04 Q406.5 396.04 407.5 396.04 H410.5 L411.5 397.24 H417 Q418 397.24 418 398.24 V404.64 H406.5Z" fill="#d8d8d8"/><rect x="546.6" y="399.79" width="2.7" height="1.1" fill="#3a3a3a"/><rect x="550.5" y="399.79" width="2.7" height="1.1" fill="#3a3a3a"/><rect x="641.3" y="399.79" width="2.7" height="1.1" fill="#3a3a3a"/><rect x="645.1999999999999" y="399.79" width="2.7" height="1.1" fill="#3a3a3a"/><circle cx="705.3" cy="397.24" r="0.95" fill="#333"/><circle cx="705.3" cy="400.84" r="0.95" fill="#333"/><circle cx="705.3" cy="404.44" r="0.95" fill="#333"/><path d="M406.5 425.46 Q406.5 424.46 407.5 424.46 H410.5 L411.5 425.66 H417 Q418 425.66 418 426.66 V433.06 H406.5Z" fill="#d8d8d8"/><rect x="546.6" y="428.21" width="2.7" height="1.1" fill="#c4c4c4"/><rect x="550.5" y="428.21" width="2.7" height="1.1" fill="#c4c4c4"/><rect x="641.3" y="428.21" width="2.7" height="1.1" fill="#c4c4c4"/><rect x="645.1999999999999" y="428.21" width="2.7" height="1.1" fill="#c4c4c4"/><circle cx="705.3" cy="425.66" r="0.95" fill="#333"/><circle cx="705.3" cy="429.26" r="0.95" fill="#333"/><circle cx="705.3" cy="432.86" r="0.95" fill="#333"/><path d="M406.5 453.88 Q406.5 452.88 407.5 452.88 H410.5 L411.5 454.08 H417 Q418 454.08 418 455.08 V461.48 H406.5Z" fill="#d8d8d8"/><rect x="546.6" y="456.63" width="2.7" height="1.1" fill="#3a3a3a"/><rect x="550.5" y="456.63" width="2.7" height="1.1" fill="#3a3a3a"/><rect x="641.3" y="456.63" width="2.7" height="1.1" fill="#3a3a3a"/><rect x="645.1999999999999" y="456.63" width="2.7" height="1.1" fill="#3a3a3a"/><circle cx="705.3" cy="454.08" r="0.95" fill="#333"/><circle cx="705.3" cy="457.68" r="0.95" fill="#333"/><circle cx="705.3" cy="461.28" r="0.95" fill="#333"/><path d="M406.5 482.30 Q406.5 481.30 407.5 481.30 H410.5 L411.5 482.50 H417 Q418 482.50 418 483.50 V489.90 H406.5Z" fill="#d8d8d8"/><rect x="546.6" y="485.05" width="2.7" height="1.1" fill="#c4c4c4"/><rect x="550.5" y="485.05" width="2.7" height="1.1" fill="#c4c4c4"/><rect x="641.3" y="485.05" width="2.7" height="1.1" fill="#c4c4c4"/><rect x="645.1999999999999" y="485.05" width="2.7" height="1.1" fill="#c4c4c4"/><circle cx="705.3" cy="482.50" r="0.95" fill="#333"/><circle cx="705.3" cy="486.10" r="0.95" fill="#333"/><circle cx="705.3" cy="489.70" r="0.95" fill="#333"/><path d="M406.5 510.72 Q406.5 509.72 407.5 509.72 H410.5 L411.5 510.92 H417 Q418 510.92 418 511.92 V518.32 H406.5Z" fill="#d8d8d8"/><circle cx="705.3" cy="510.92" r="0.95" fill="#333"/><circle cx="705.3" cy="514.52" r="0.95" fill="#333"/><circle cx="705.3" cy="518.12" r="0.95" fill="#333"/></g>
<path d="M724.5 193.2 L726.3 191 L728.1 193.2Z" fill="#505050"/><path d="M724.3 504.3 L726.5 507 L728.7 504.3Z" fill="#505050"/>
<path d="M383.4 513.7 L380.2 516 L383.4 518.4Z" fill="#606060"/><path d="M715.7 513.8 L718.6 516 L715.7 518.3Z" fill="#505050"/>
<path d="M0 522.5 Q0 527.5 5 527.5 H725 Q730 527.5 730 522.5 V529 H0Z" fill="#fff"/><path d="M0 522.5 Q0 527.5 5 527.5 H725 Q730 527.5 730 522.5" fill="none" stroke="#cdcdcd" stroke-width="1"/></svg>
</body></html>
